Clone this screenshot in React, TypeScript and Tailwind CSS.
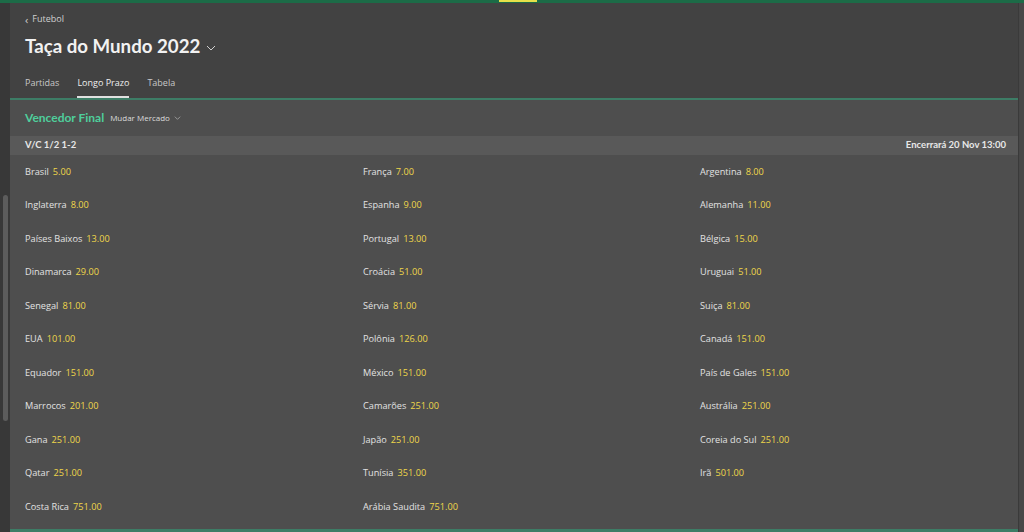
const rows: [string, string][][] = [
  [["Brasil", "5.00"], ["França", "7.00"], ["Argentina", "8.00"]],
  [["Inglaterra", "8.00"], ["Espanha", "9.00"], ["Alemanha", "11.00"]],
  [["Países Baixos", "13.00"], ["Portugal", "13.00"], ["Bélgica", "15.00"]],
  [["Dinamarca", "29.00"], ["Croácia", "51.00"], ["Uruguai", "51.00"]],
  [["Senegal", "81.00"], ["Sérvia", "81.00"], ["Suiça", "81.00"]],
  [["EUA", "101.00"], ["Polônia", "126.00"], ["Canadá", "151.00"]],
  [["Equador", "151.00"], ["México", "151.00"], ["País de Gales", "151.00"]],
  [["Marrocos", "201.00"], ["Camarões", "251.00"], ["Austrália", "251.00"]],
  [["Gana", "251.00"], ["Japão", "251.00"], ["Coreia do Sul", "251.00"]],
  [["Qatar", "251.00"], ["Tunísia", "351.00"], ["Irã", "501.00"]],
  [["Costa Rica", "751.00"], ["Arábia Saudita", "751.00"]],
]

function Chevron({ className }: { className?: string }) {
  return (
    <svg viewBox="0 0 10 6" className={className} fill="none" stroke="currentColor" strokeWidth="1">
      <path d="M1 1l4 4 4-4" />
    </svg>
  )
}

export default function App() {
  return (
    <div
      className="w-[1024px] h-[532px] overflow-hidden bg-[#424242] flex flex-col"
      style={{ fontFamily: '"Open Sans", "Noto Sans", sans-serif' }}
    >
      {/* top green bar */}
      <div className="relative h-[3px] shrink-0 bg-[#1c6b47]">
        <div className="absolute left-[499px] top-0 h-[2px] w-[38px] bg-[#e6e04a]" />
      </div>

      <div className="flex flex-1 min-h-0">
        {/* left scroll strip */}
        <div className="relative w-[10px] shrink-0 bg-[#383838]">
          <div className="absolute left-[3px] top-[192px] h-[226px] w-[5px] rounded bg-[#5c5c5c]" />
        </div>

        <div className="flex flex-1 flex-col min-w-0">
          {/* header */}
          <div className="h-[95px] shrink-0 overflow-hidden bg-[#424242] px-[15px]">
            <div className="flex items-center gap-[4px] pt-[8px] text-[9px] text-[#d0d0d0] leading-[16px]">
              <span className="text-[11px] leading-none">‹</span>
              <span>Futebol</span>
            </div>
            <div className="mt-[7px] flex items-center gap-[6px]" style={{ fontFamily: 'Lato, "Open Sans", sans-serif' }}>
              <span className="text-[18.7px] font-bold text-[#f2f2f2] leading-[24px]">Taça do Mundo 2022</span>
              <Chevron className="mt-[3px] h-[6px] w-[10px] text-[#cfcfcf]" />
            </div>
            <div className="mt-[17px] flex gap-[18px] text-[9px] leading-[16px]">
              <span className="text-[#c8c8c8] pb-[5px]">Partidas</span>
              <span className="text-[#f0f0f0] pb-[5px] border-b-2 border-[#e0e0e0]">Longo Prazo</span>
              <span className="text-[#c8c8c8] pb-[5px]">Tabela</span>
            </div>
          </div>

          {/* market panel */}
          <div className="flex flex-1 flex-col min-h-0 border-t-2 border-[#3d7d66] bg-[#4e4e4e]">
            <div className="flex h-[36px] shrink-0 items-center gap-[6px] px-[15px]">
              <span className="text-[12px] font-bold text-[#4fce9c]" style={{ fontFamily: 'Lato, "Open Sans", sans-serif' }}>Vencedor Final</span>
              <span className="text-[8px] text-[#dcdcdc]">Mudar Mercado</span>
              <Chevron className="-ml-[2px] h-[4px] w-[7px] text-[#bdbdbd]" />
            </div>
            <div
              className="flex h-[19px] shrink-0 items-center justify-between bg-[#595959] pl-[15px] pr-[12px] text-[9.5px] font-bold text-[#e8e8e8]"
              style={{ fontFamily: 'Lato, "Open Sans", sans-serif' }}
            >
              <span>V/C 1/2 1-2</span>
              <span>Encerrará 20 Nov 13:00</span>
            </div>
            <div className="flex-1 pl-[15px]">
              {rows.map((row, i) => (
                <div key={i} className="grid h-[33.5px] grid-cols-[338px_337px_1fr] items-center text-[9.2px]">
                  {row.map(([team, odd]) => (
                    <div key={team} className="flex gap-[4px]">
                      <span className="text-[#e2e2e2]">{team}</span>
                      <span className="text-[#eed64a]">{odd}</span>
                    </div>
                  ))}
                </div>
              ))}
            </div>
            <div className="h-[3px] shrink-0 bg-[#3d7d66]" />
          </div>
        </div>

        {/* right strip */}
        <div className="w-[6px] shrink-0 border-l border-[#3a3a3a] bg-[#474747]" />
      </div>
    </div>
  )
}
